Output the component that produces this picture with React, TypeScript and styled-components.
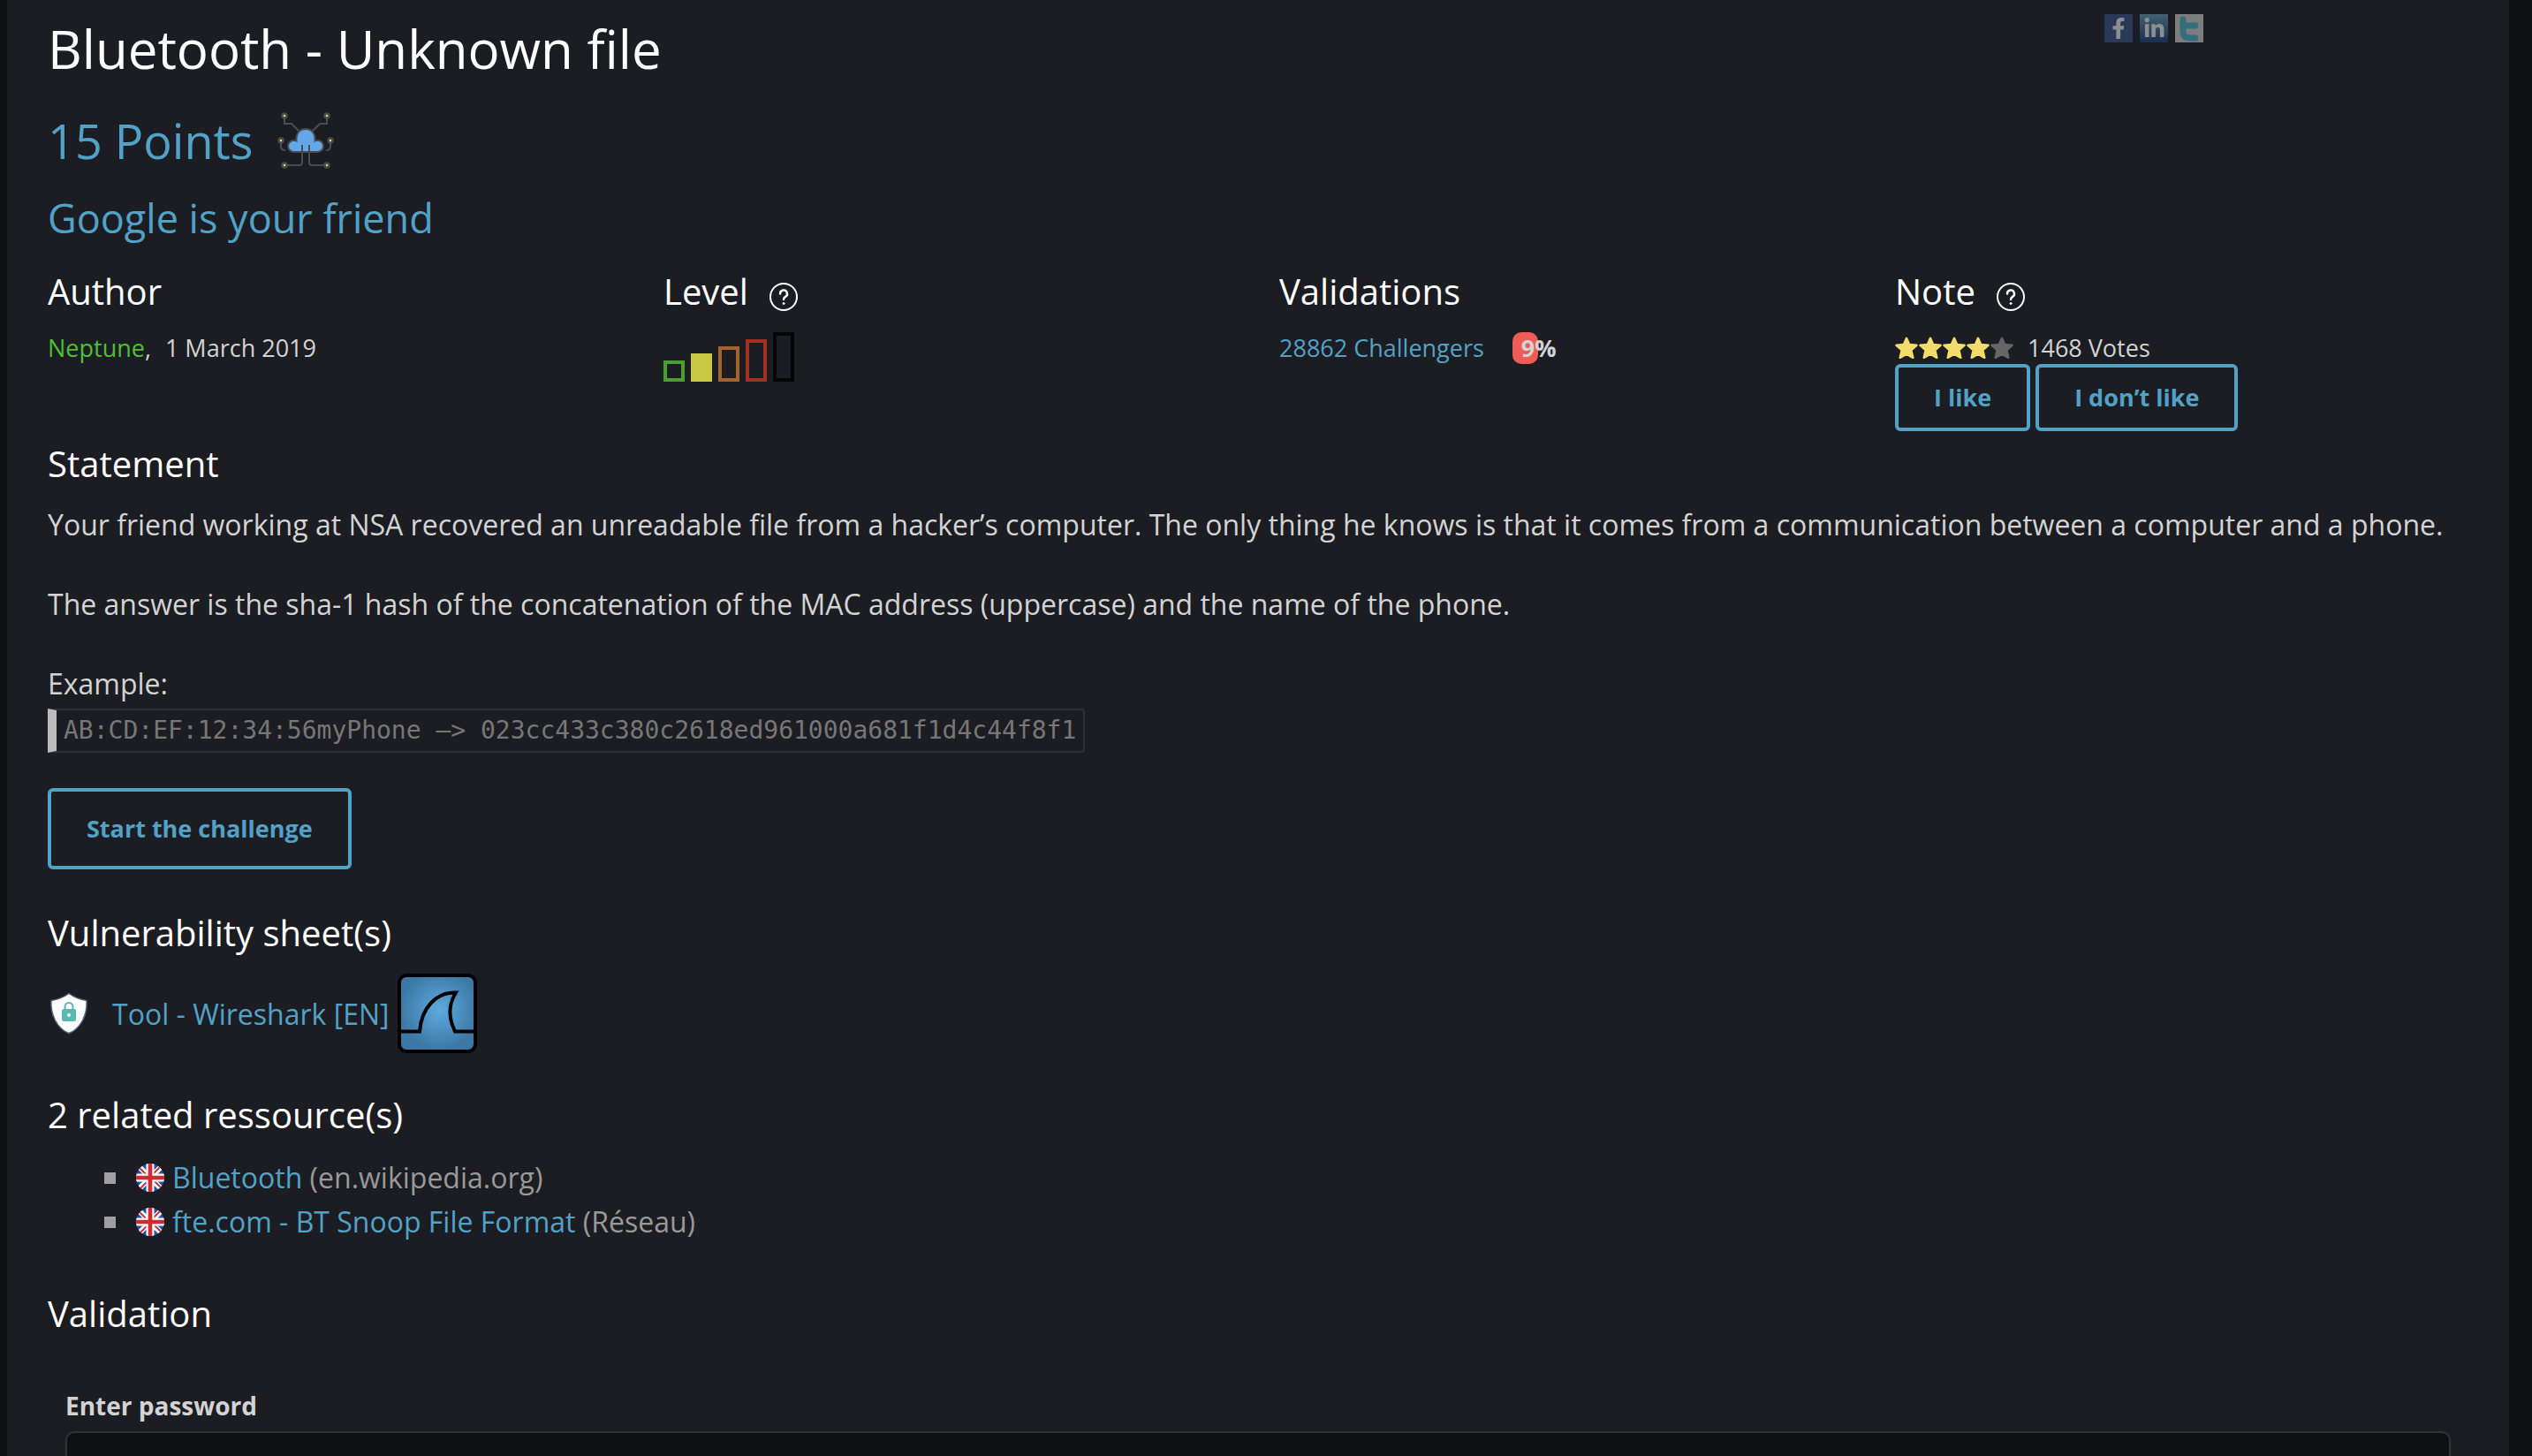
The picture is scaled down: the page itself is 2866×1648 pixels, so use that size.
import React from "react";
import styled, { createGlobalStyle } from "styled-components";
import { FaFacebookF, FaLinkedinIn } from "react-icons/fa";

const color = {
  outer: "#0f1013",
  panel: "#1c1d22",
  link: "#52a2c8",
  text: "#d3d3d3",
  muted: "#999999",
  line: "#2f3033",
};

const GlobalStyle = createGlobalStyle`
  *, *::before, *::after { box-sizing: border-box; }
  html, body { margin: 0; padding: 0; background: ${color.outer}; }
  body {
    color: ${color.text};
    font-family: "Open Sans", "Noto Sans", sans-serif;
    font-size: 32px;
    line-height: 45px;
  }
  h1, h2, h3, h4, p, ul, dl { margin: 0; padding: 0; font-weight: 400; }
  svg { display: block; flex: none; }
`;

const Page = styled.div`
  height: 100vh;
  overflow-y: auto;
  scrollbar-width: none;
  padding: 0 26px 0 8px;
`;

const Panel = styled.main`
  display: flex;
  flex-direction: column;
  min-height: 100%;
  padding: 15px 46px 60px;
  background: ${color.panel};
`;

const Header = styled.header`
  display: flex;
  justify-content: space-between;
  align-items: flex-start;
`;

const Title = styled.h1`
  && { color: #ffffff; font-size: 60px; line-height: 80px; }
`;

const ShareList = styled.nav`
  display: flex;
  align-items: center;
  gap: 8px;
  width: 412px;
  height: 34px;
`;

const ShareLink = styled.a<{ $bg: string; $fg: string }>`
  display: flex;
  align-items: center;
  justify-content: center;
  width: 32px;
  height: 32px;
  background: ${(p) => p.$bg};
  color: ${(p) => p.$fg};
  opacity: 0.5;
`;

const Points = styled.h2`
  && {
    display: flex;
    align-items: center;
    gap: 28px;
    margin-top: 28px;
    color: ${color.link};
    font-size: 54px;
    line-height: 72px;
  }
`;

const Tagline = styled.h3`
  && { margin: 22px 0 25px; color: ${color.link}; font-size: 45px; line-height: 60px; }
`;

const Meta = styled.div`
  display: grid;
  grid-template-columns: repeat(4, 1fr);
  column-gap: 48px;
  margin-bottom: 9px;
`;

const Cell = styled.section`
  font-size: 27px;
  line-height: 36px;
`;

const Heading = styled.h4`
  && {
    display: flex;
    align-items: center;
    gap: 24px;
    margin-bottom: 18px;
    color: #ffffff;
    font-size: 40px;
    line-height: 56px;
  }
`;

const Inline = styled.div<{ $gap: number }>`
  display: flex;
  align-items: center;
  gap: ${(p) => p.$gap}px;
`;

const Link = styled.a<{ $tone?: string }>`
  color: ${(p) => p.$tone ?? color.link};
  text-decoration: none;
`;

const HelpButton = styled.button`
  padding: 12px 0 0;
  border: 0;
  background: none;
  color: #ffffff;
`;

const Levels = styled.div`
  display: flex;
  align-items: flex-end;
  gap: 7px;
`;

const LevelBar = styled.span<{ $tone: string; $step: number; $filled?: boolean }>`
  width: 24px;
  height: ${(p) => 16 + p.$step * 8}px;
  border: 4px solid ${(p) => p.$tone};
  background: ${(p) => (p.$filled ? p.$tone : "none")};
`;

const Rate = styled.span`
  width: 29px;
  height: 36px;
  padding-left: 10px;
  border-radius: 10px;
  background: #ef5b55;
  font-weight: 700;
  white-space: nowrap;
`;

const Stars = styled.span`
  display: flex;
  gap: 1px;
`;

const Button = styled.button<{ $large?: boolean }>`
  align-self: flex-start;
  height: ${(p) => (p.$large ? 92 : 76)}px;
  padding: 0 40px;
  border: 4px solid ${color.link};
  border-radius: 6px;
  background: none;
  color: ${color.link};
  font-family: inherit;
  font-size: 27px;
  font-weight: 700;
  line-height: 36px;
`;

const Paragraph = styled.p<{ $last?: boolean }>`
  margin-bottom: ${(p) => (p.$last ? 6 : 45)}px;
`;

const Code = styled.code`
  align-self: flex-start;
  margin-bottom: 40px;
  padding: 5px 8px 5px 8px;
  border: 2px solid ${color.line};
  border-left: 10px solid #bbbbbb;
  border-radius: 0 4px 4px 0;
  color: #777777;
  font-family: "DejaVu Sans Mono", monospace;
  font-size: 28px;
  line-height: 36px;
`;

const Block = styled.section<{ $top: number }>`
  margin-top: ${(p) => p.$top}px;
`;

const Sheet = styled.div`
  display: flex;
  align-items: center;
  gap: 10px;
`;

const ShieldSlot = styled.span`
  width: 63px;
  padding-left: 2px;
`;

const Resources = styled.ul`
  padding-left: 64px;
  color: ${color.muted};
  line-height: 50px;
  list-style: none;
  && { padding-left: 64px; }
`;

const Resource = styled.li`
  display: flex;
  align-items: center;
  gap: 9px;

  &::before {
    content: "";
    width: 13px;
    height: 13px;
    margin-right: 14px;
    background: #a0a0a0;
  }
`;

const Form = styled.form`
  display: flex;
  flex-direction: column;
  gap: 10px;
  padding: 39px 20px 0;
`;

const Label = styled.label`
  font-size: 28px;
  font-weight: 700;
  line-height: 38px;
`;

const Input = styled.input`
  width: 100%;
  height: 76px;
  padding: 0 20px;
  border: 2px solid #333333;
  border-radius: 10px;
  background: ${color.outer};
  color: ${color.text};
  font: inherit;
`;

const TwitterLogo = () => (
  <svg width="32" height="32" viewBox="0 0 32 32" fill="none" stroke="#4fbcd2" strokeWidth="7" strokeLinecap="round" strokeLinejoin="round">
    <path d="M9 6v13q0 8 8 8h6M9 13h14" />
  </svg>
);

const HelpIcon = () => (
  <svg width="32" height="32" viewBox="0 0 32 32" fill="none" stroke="currentColor" strokeWidth="2" strokeLinecap="round">
    <circle cx="16" cy="16" r="15" />
    <path d="M12 12.5a4 4 0 1 1 6 3.4q-2 1.2-2 3" strokeWidth="2.4" />
    <circle cx="16" cy="23.5" r="1" fill="currentColor" strokeWidth="1" />
  </svg>
);

const nodes = [
  [8, 6], [56, 6], [4, 34], [60, 34], [8, 62], [56, 62],
];

const CloudIcon = () => (
  <svg width="64" height="68" viewBox="0 0 64 68" fill="none" stroke="#484c50" strokeWidth="2">
    <path d="M8 8v7h8l9 9M56 8v7h-8l-9 9M4 36v5q0 4 5 4M60 36v5q0 4-5 4" />
    <path d="M18 47a6.500 6.500 0 0 1 1-13q2 0 2.500.3C21 26 25 21 32 21s11 5 10.500 13.300Q43 34 45 34a6.500 6.500 0 0 1 1 13z" fill="#64a7e8" />
    <path d="M28 39v20q0 3-3 3H10M36 39v20q0 3 3 3h15" />
    {nodes.map(([x, y]) => (
      <circle key={`${x}-${y}`} cx={x} cy={y} r="2.500" fill="#f7cf5c" strokeWidth="2.500" />
    ))}
  </svg>
);

const Star = ({ on }: { on: boolean }) => (
  <svg width="26" height="26" viewBox="0 0 26 26" fill={on ? "#f2dc6c" : "#666666"} stroke={on ? "#f2dc6c" : "#666666"} strokeWidth="2.500" strokeLinejoin="round">
    <path d="M13 1.800l3.200 7.200 8.300.8-6.200 5.500 2 8.500L13 19.600l-7.300 4.200 2-8.500L1.500 9.800l8.300-.8z" />
  </svg>
);

const ShieldIcon = () => (
  <svg width="44" height="48" viewBox="0 0 44 48">
    <path d="M22 1.500Q31 8 42 9.500 43 21 37.500 32 31.500 43 22 46.500 12.500 43 6.500 32 1 21 2 9.500 13 8 22 1.500z" fill="#ffffff" stroke="#5a6078" strokeWidth="1.500" />
    <rect x="14" y="19" width="16" height="14" rx="2" fill="#56bab4" />
    <path d="M17.500 20v-3.500a4.500 4.500 0 0 1 9 0V20" fill="none" stroke="#56bab4" strokeWidth="2" />
    <circle cx="22" cy="26" r="2" fill="#ffffff" />
  </svg>
);

const WiresharkIcon = () => (
  <svg width="90" height="90" viewBox="0 0 90 90">
    <defs>
      <radialGradient id="shark" cx="0.53" cy="0.45" r="0.52">
        <stop offset="0" stopColor="#5dabe0" />
        <stop offset="1" stopColor="#3c78a4" />
      </radialGradient>
    </defs>
    <rect x="2" y="2" width="86" height="86" rx="8" fill="url(#shark)" stroke="#000000" strokeWidth="4" />
    <path d="M3 65.500h22C27 38 44 21 66 21.500 58 34 57 49 65 65.500h22" fill="none" stroke="#000000" strokeWidth="4" />
  </svg>
);

const FlagIcon = ({ id }: { id: string }) => (
  <svg width="32" height="32" viewBox="0 0 32 32">
    <clipPath id={id}><circle cx="16" cy="16" r="16" /></clipPath>
    <g clipPath={`url(#${id})`} fill="none">
      <path d="M0 0h32v32H0z" fill="#2450a8" />
      <path d="M2 2l28 28M30 2L2 30" stroke="#ffffff" strokeWidth="6" />
      <path d="M2 3l14 14M30 29L16 15M29 2L16 15M3 30l13-13" stroke="#cf2b33" strokeWidth="1.800" />
      <path d="M16 0v32M0 16h32" stroke="#ffffff" strokeWidth="9" />
      <path d="M16 0v32M0 16h32" stroke="#cf2b33" strokeWidth="4.600" />
    </g>
  </svg>
);

const levels = ["#4a9e30", "#c8c845", "#a3642b", "#a23323", "#050505"];

const resources = [
  { id: "flag-wiki", name: "Bluetooth", source: "(en.wikipedia.org)" },
  { id: "flag-fte", name: "fte.com - BT Snoop File Format", source: "(Réseau)" },
];

const Help = ({ label }: { label: string }) => (
  <HelpButton type="button" aria-label={label}>
    <HelpIcon />
  </HelpButton>
);

export default function App() {
  return (
    <Page>
      <GlobalStyle />
      <Panel>
        <Header>
          <Title>Bluetooth - Unknown file</Title>
          <ShareList aria-label="Share">
            <ShareLink href="#facebook" aria-label="Facebook" $bg="#3b5590" $fg="#ffffff">
              <FaFacebookF size={24} />
            </ShareLink>
            <ShareLink href="#linkedin" aria-label="LinkedIn" $bg="linear-gradient(#6ba4bd, #184080)" $fg="#ffffff">
              <FaLinkedinIn size={25} />
            </ShareLink>
            <ShareLink href="#twitter" aria-label="Twitter" $bg="#dcdcdc" $fg="#4fbcd2">
              <TwitterLogo />
            </ShareLink>
          </ShareList>
        </Header>
        <Points>
          15 Points
          <CloudIcon />
        </Points>
        <Tagline>Google is your friend</Tagline>

        <Meta>
          <Cell>
            <Heading>Author</Heading>
            <Inline $gap={16}>
              <span><Link href="#neptune" $tone="#4ebf33">Neptune</Link>,</span>
              <span>1 March 2019</span>
            </Inline>
          </Cell>
          <Cell>
            <Heading>Level <Help label="About levels" /></Heading>
            <Levels>
              {levels.map((tone, i) => (
                <LevelBar key={tone} $tone={tone} $step={i + 1} $filled={i === 1} />
              ))}
            </Levels>
          </Cell>
          <Cell>
            <Heading>Validations</Heading>
            <Inline $gap={32}>
              <Link href="#challengers">28862 Challengers</Link>
              <Rate>9%</Rate>
            </Inline>
          </Cell>
          <Cell>
            <Heading>Note <Help label="About notes" /></Heading>
            <Inline $gap={16}>
              <Stars>
                {[1, 2, 3, 4, 5].map((n) => <Star key={n} on={n < 5} />)}
              </Stars>
              <span>1468 Votes</span>
            </Inline>
            <Inline $gap={6}>
              <Button type="button">I like</Button>
              <Button type="button">I don’t like</Button>
            </Inline>
          </Cell>
        </Meta>

        <Heading>Statement</Heading>
        <Paragraph>
          Your friend working at NSA recovered an unreadable file from a hacker’s computer. The only thing he knows is that it comes from a communication between a computer and a phone.
        </Paragraph>
        <Paragraph>
          The answer is the sha-1 hash of the concatenation of the MAC address (uppercase) and the name of the phone.
        </Paragraph>
        <Paragraph $last>Example:</Paragraph>
        <Code>AB:CD:EF:12:34:56myPhone –&gt; 023cc433c380c2618ed961000a681f1d4c44f8f1</Code>
        <Button type="button" $large>Start the challenge</Button>

        <Block $top={44}>
          <Heading>Vulnerability sheet(s)</Heading>
          <Sheet>
            <ShieldSlot><ShieldIcon /></ShieldSlot>
            <Link href="#wireshark">Tool - Wireshark [EN]</Link>
            <WiresharkIcon />
          </Sheet>
        </Block>

        <Block $top={42}>
          <Heading>2 related ressource(s)</Heading>
          <Resources>
            {resources.map((r) => (
              <Resource key={r.id}>
                <FlagIcon id={r.id} />
                <span><Link href={`#${r.id}`}>{r.name}</Link> {r.source}</span>
              </Resource>
            ))}
          </Resources>
        </Block>

        <Block $top={51}>
          <Heading>Validation</Heading>
          <Form>
            <Label htmlFor="password">Enter password</Label>
            <Input id="password" type="text" />
          </Form>
        </Block>
      </Panel>
    </Page>
  );
}
